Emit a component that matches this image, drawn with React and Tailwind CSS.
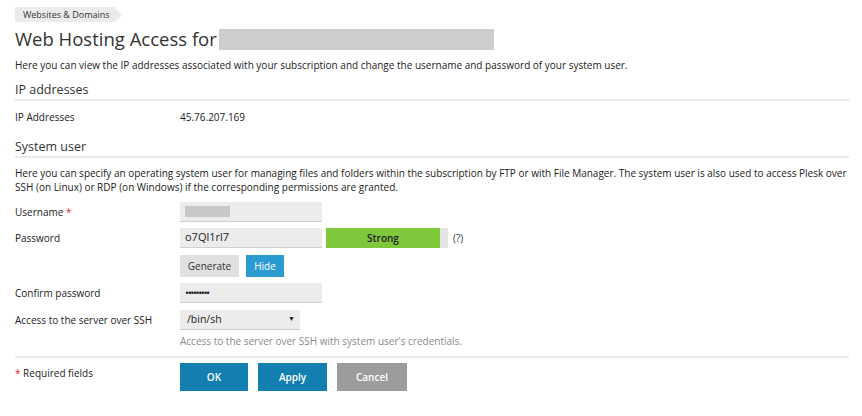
import React from 'react';

const font = { fontFamily: '"Open Sans", "Liberation Sans", sans-serif' };

function Heading({ children }) {
  return (
    <div className="border-b-2 border-[#e8e8e8] pb-[1px] text-[12.5px] leading-[16px] text-[#333]">
      {children}
    </div>
  );
}

function Row({ label, required, children }) {
  return (
    <div className="flex items-center">
      <div className="w-[165px] shrink-0 text-[10px] text-[#222]">
        {label}
        {required && <span className="text-[#e0282e]"> *</span>}
      </div>
      {children}
    </div>
  );
}

function Field({ children, className = 'w-[142px] px-[5px] text-[11px]' }) {
  return (
    <div className={`flex h-[20px] items-center border-b border-[#cfcfcf] bg-[#ececec] text-[#222] ${className}`}>
      {children}
    </div>
  );
}

export default function App() {
  return (
    <div className="min-h-[416px] bg-white pt-[7px]" style={font}>
      <div className="ml-[15px] w-[834px]">
        {/* breadcrumb */}
        <div className="flex h-[15px] items-center">
          <div className="flex h-[15px] items-center bg-[#ebebeb] pl-[8px] pr-[5px] text-[9px] text-[#333]">
            Websites &amp; Domains
          </div>
          <div className="h-0 w-0 border-y-[7.5px] border-l-[7px] border-y-transparent border-l-[#ebebeb]" />
        </div>

        <div className="mt-[5px] flex h-[24px] items-center">
          <h1 className="text-[18.5px] leading-[24px] text-[#333]">Web Hosting Access for</h1>
          <div className="ml-[2px] h-[21px] w-[275px] bg-[#cdcdcd]" />
        </div>

        <p className="mt-[7px] text-[10px] leading-[14px] text-[#222]">
          Here you can view the IP addresses associated with your subscription and change the username and password of your system user.
        </p>

        <div className="mt-[10px]">
          <Heading>IP addresses</Heading>
        </div>

        <div className="mt-[9px] flex text-[10px] leading-[14px] text-[#222]">
          <div className="w-[165px]">IP Addresses</div>
          <div>45.76.207.169</div>
        </div>

        <div className="mt-[15px]">
          <Heading>System user</Heading>
        </div>

        <p className="mt-[8px] text-[10px] leading-[14px] text-[#222]">
          Here you can specify an operating system user for managing files and folders within the subscription by FTP or with File Manager. The system user is also used to access Plesk over SSH (on Linux) or RDP (on Windows) if the corresponding permissions are granted.
        </p>

        <div className="mt-[8px] flex flex-col">
          <Row label="Username" required>
            <Field>
              <div className="h-[11px] w-[45px] bg-[#c8c8c8]" />
            </Field>
          </Row>

          <div className="mt-[6px]">
            <Row label="Password">
              <Field>o7Ql1rl7</Field>
              <div className="ml-[4px] flex h-[20px] w-[122px] bg-[#e3e3e3]">
                <div className="flex h-[20px] w-[114px] items-center justify-center bg-[#80c83b] text-[10px] font-semibold text-[#222]">
                  Strong
                </div>
              </div>
              <span className="ml-[5px] text-[10px] text-[#333]">(?)</span>
            </Row>
          </div>

          <div className="mt-[7px] flex pl-[165px]">
            <button className="h-[22px] w-[59px] bg-[#e0e0e0] text-[10px] text-[#333]">Generate</button>
            <button className="ml-[7px] h-[22px] w-[38px] bg-[#2a9bd1] text-[10px] text-white">Hide</button>
          </div>

          <div className="mt-[6px]">
            <Row label="Confirm password">
              <Field>
                <span className="text-[11px] leading-none tracking-[-1.5px]">•••••••••</span>
              </Field>
            </Row>
          </div>

          <div className="mt-[7px]">
            <Row label="Access to the server over SSH">
              <Field className="w-[120px] justify-between pl-[7px] pr-[5px] text-[10.5px]">
                <span>/bin/sh</span>
                <span className="text-[7px] text-[#222]">▼</span>
              </Field>
            </Row>
          </div>

          <div className="mt-[4px] pl-[165px] text-[10px] leading-[14px] text-[#8a8a8a]">
            Access to the server over SSH with system user's credentials.
          </div>
        </div>

        <div className="mt-[8px] border-t-2 border-[#ebebeb]" />

        <div className="mt-[5px] flex">
          <div className="w-[165px] pt-[3px] text-[10px] text-[#222]">
            <span className="text-[#e0282e]">*</span> Required fields
          </div>
          <button className="h-[28px] w-[68px] bg-[#127fb0] text-[10px] font-semibold text-white">OK</button>
          <button className="ml-[10px] h-[28px] w-[69px] bg-[#127fb0] text-[10px] font-semibold text-white">Apply</button>
          <button className="ml-[10px] h-[28px] w-[70px] bg-[#9c9c9c] text-[10px] font-semibold text-white">Cancel</button>
        </div>
      </div>
    </div>
  );
}
